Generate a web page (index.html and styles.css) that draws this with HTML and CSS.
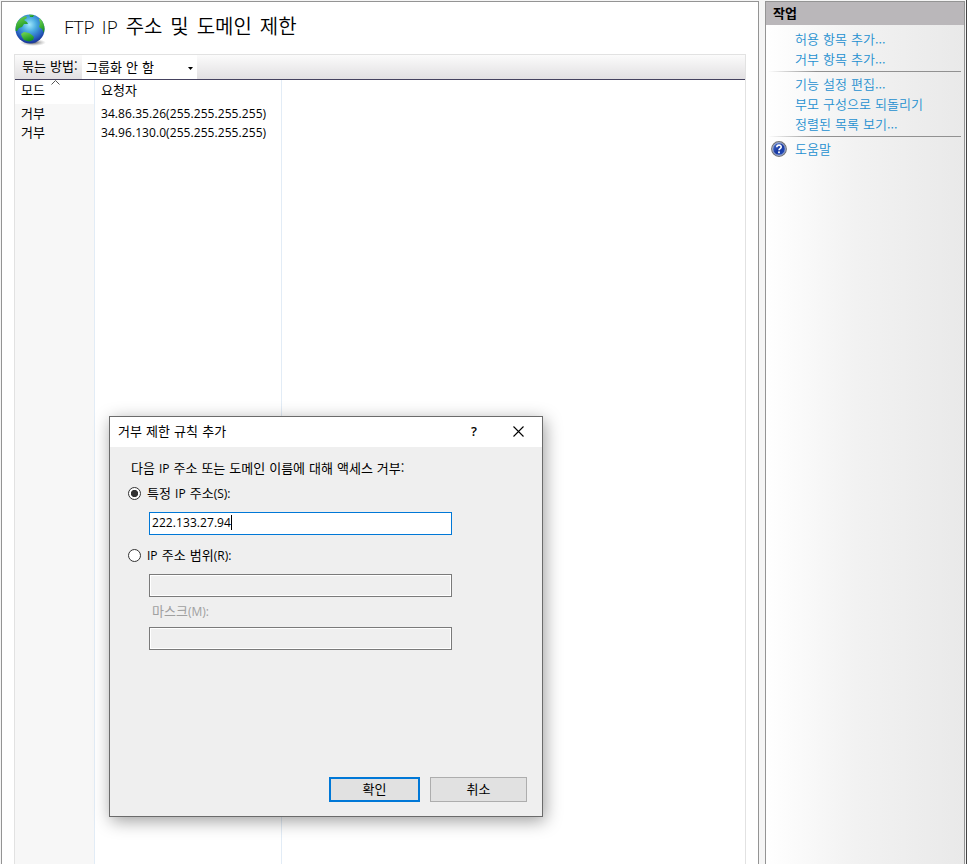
FILE: index.html
```html
<!DOCTYPE html>
<html lang="ko">
<head>
<meta charset="utf-8">
<title>FTP IP 주소 및 도메인 제한</title>
<link rel="stylesheet" href="styles.css">
</head>
<body>
<div class="window">
  <main class="page">
    <header class="heading">
      <svg class="globe" width="34" height="34" viewBox="0 0 34 34">
        <defs>
          <radialGradient id="sea" cx="48%" cy="35%" r="62%">
            <stop offset="0" stop-color="#a0e8fc"/><stop offset=".4" stop-color="#48aae0"/><stop offset=".8" stop-color="#2860c0"/><stop offset="1" stop-color="#1a3a9c"/>
          </radialGradient>
          <linearGradient id="land" x2="0.4" y2="1"><stop offset="0" stop-color="#7bdc55"/><stop offset="1" stop-color="#159221"/></linearGradient>
          <radialGradient id="shade"><stop offset="0" stop-color="#444" stop-opacity=".9"/><stop offset="1" stop-color="#888" stop-opacity="0"/></radialGradient>
          <clipPath id="ball"><circle cx="16" cy="16" r="14.5"/></clipPath>
        </defs>
        <ellipse cx="19" cy="29.5" rx="13" ry="3.5" fill="url(#shade)"/>
        <circle cx="16" cy="16" r="14.5" fill="url(#sea)"/>
        <g clip-path="url(#ball)" fill="url(#land)">
          <path d="M1 18 2 10 7 5 12 3 13 5 10 7 13 9 14 11 10 11 8 14 5 15 3 18Z"/>
          <path d="M7 21 10 19 15 20 18 22 20 24 19 27 15 28.5 10 27 8 24Z"/>
          <path d="M25 6 28 5 32 14 30 20 28 16 25 14 26 10Z"/>
          <path d="M15 1 20 2 19 4 16 4Z"/>
        </g>
      </svg>
      <h1><span class="h-latin">FTP IP</span> 주소 및 도메인 제한</h1>
    </header>
    <section class="list">
      <div class="toolbar">
        <span class="group-label">묶는 방법:</span>
        <div class="select"><span>그룹화 안 함</span><svg width="5" height="3" viewBox="0 0 5 3"><path d="M0 0H5L2.5 3Z"/></svg></div>
      </div>
      <div class="columns">
        <div class="col mode">
          <div class="th">모드<svg class="sort" width="9" height="5" viewBox="0 0 9 5"><path d="M.5 4.5 4.5.5 8.5 4.5" fill="none" stroke="#555"/></svg></div>
          <div class="td">거부</div>
          <div class="td">거부</div>
        </div>
        <div class="col requester">
          <div class="th">요청자</div>
          <div class="td latin">34.86.35.26(255.255.255.255)</div>
          <div class="td latin">34.96.130.0(255.255.255.255)</div>
        </div>
        <div class="col"></div>
      </div>
    </section>
  </main>
  <aside class="actions">
    <h2>작업</h2>
    <ul>
      <li>허용 항목 추가...</li>
      <li>거부 항목 추가...</li>
    </ul>
    <ul>
      <li>기능 설정 편집...</li>
      <li>부모 구성으로 되돌리기</li>
      <li>정렬된 목록 보기...</li>
    </ul>
    <ul>
      <li class="help"><svg width="16" height="16" viewBox="0 0 16 16"><defs><linearGradient id="hg" x2="1" y2="1"><stop offset="0" stop-color="#5e86dc"/><stop offset=".5" stop-color="#1839a2"/><stop offset="1" stop-color="#2453c5"/></linearGradient></defs><circle cx="8" cy="8" r="7.3" fill="url(#hg)" stroke="#777" stroke-width="1.2"/><circle cx="8" cy="8" r="6.3" fill="none" stroke="#c5cad6" stroke-width=".9"/><path d="M5.8 6.3C5.8 3.3 10.4 3.5 10.2 6.1 10.1 7.6 8 7.7 8 9.3" fill="none" stroke="#fff" stroke-width="1.6"/><rect x="7.1" y="10.4" width="1.8" height="1.8" fill="#fff"/></svg><span>도움말</span></li>
    </ul>
  </aside>
</div>
<div class="dialog">
  <div class="titlebar">
    <span class="caption">거부 제한 규칙 추가</span>
    <span class="question">?</span>
    <svg width="11" height="11" viewBox="0 0 11 11"><path d="M.5.5 10.5 10.5M10.5.5.5 10.5" fill="none" stroke="#000" stroke-width="1.1"/></svg>
  </div>
  <div class="body">
    <p class="prompt">다음 <span class="latin">IP</span> 주소 또는 도메인 이름에 대해 액세스 거부:</p>
    <div class="option"><i class="radio on"></i><span>특정 <span class="latin">IP</span> 주소<span class="latin">(S):</span></span></div>
    <div class="field focus"><span class="latin address">222.133.27.94</span><i class="caret"></i></div>
    <div class="option second"><i class="radio"></i><span><span class="latin">IP</span> 주소 범위<span class="latin">(R):</span></span></div>
    <div class="field off"></div>
    <div class="mask">마스크<span class="latin">(M):</span></div>
    <div class="field off"></div>
    <div class="buttons"><div class="button default">확인</div><div class="button">취소</div></div>
  </div>
</div>
</body>
</html>
```
FILE: styles.css
```css
* { box-sizing: border-box; }
body {
  margin: 0;
  height: 864px;
  overflow: hidden;
  position: relative;
  background: #f5f5f5;
  color: #000;
  font: 13px/20px "Noto Sans CJK KR", sans-serif;
  font-weight: 400;
  word-spacing: .5px;
  white-space: nowrap;
}
h1, h2, p, ul { margin: 0; padding: 0; font-weight: inherit; list-style: none; }
svg { display: block; flex: none; }
.latin { font-family: "Open Sans", "Noto Sans CJK KR", sans-serif; font-size: 12px; font-weight: 400; }
.window { display: flex; gap: 6px; height: 864px; padding: 1px 0 0 1px; border-right: 1px solid #444; }
.page {
  width: 758px;
  display: flex;
  flex-direction: column;
  padding: 0 12px;
  background: #fff;
  border: 1px solid #949494;
  border-bottom: 0;
}
.heading { display: flex; height: 52px; padding-top: 11px; }
.heading h1 { margin: -1px 0 0 16px; font-size: 20px; font-weight: 350; line-height: 28px; word-spacing: 2.3px; }
.h-latin { font-family: "Open Sans", sans-serif; font-size: 19px; }
.list { flex: 1; display: flex; flex-direction: column; border: 1px solid #e2e2e2; border-bottom: 0; }
.toolbar {
  height: 25px;
  display: flex;
  line-height: 21px;
  background: linear-gradient(#fbfbfb, #e2e0e2);
  border-bottom: 1px solid #45425f;
}
.group-label { width: 67px; padding-left: 7px; }
.select { width: 115px; display: flex; align-items: center; justify-content: space-between; padding: 0 4px 1px 4px; background: #fff; }
.select svg { margin-top: 3px; }
.columns { flex: 1; display: flex; }
.col { border-right: 1px solid #e2ecf6; }
.col:last-child { border: 0; }
.mode { width: 80px; background: #f7f7f7; }
.requester { width: 187px; }
.th { position: relative; height: 24px; padding-left: 6px; line-height: 20px; background: #fff; }
.td { height: 19px; padding-left: 6px; line-height: 17px; }
.td.latin { line-height: 19px; letter-spacing: .07px; }
.sort { position: absolute; left: 36px; top: 0; }
.actions {
  width: 200px;
  border: 1px solid #949494;
  border-bottom: 0;
  background: linear-gradient(90deg, #fff, #f2f2f2 45%, #e9e9e9);
}
.actions h2 { height: 23px; margin-bottom: 4px; padding-left: 7px; font-size: 13px; font-weight: 700; line-height: 21px; background: #bab7ba; }
.actions ul { padding-left: 29px; color: #2490d0; font-weight: 350; }
.actions li { height: 20px; line-height: 20px; }
.actions ul + ul { position: relative; margin-top: 2px; padding-top: 3px; }
.actions ul + ul::before {
  content: "";
  position: absolute;
  left: 2px;
  right: 3px;
  top: 0;
  height: 1px;
  background: linear-gradient(90deg, transparent, #919191 25%, #919191);
}
.help { display: flex; align-items: center; gap: 8px; margin-left: -24px; }
.dialog {
  position: absolute;
  left: 109px;
  top: 416px;
  width: 434px;
  height: 401px;
  display: flex;
  flex-direction: column;
  background: #efefef;
  border: 1px solid #6b6b6b;
  box-shadow: 2px 4px 16px rgba(0, 0, 0, .38);
}
.titlebar { height: 30px; display: flex; align-items: center; padding: 0 18px 2px 8px; background: #fff; }
.caption { flex: 1; }
.titlebar svg { margin-top: 1px; }
.question { width: 42px; font: 600 13px/20px "Open Sans", sans-serif; }
.body { flex: 1; display: flex; flex-direction: column; padding: 11px 15px 14px 18px; }
.prompt { padding-left: 3px; height: 20px; word-spacing: .35px; }
.option { display: flex; align-items: center; gap: 6px; height: 20px; margin-top: 5px; }
.option.second { margin: 10px 0 1px; }
.radio { width: 13px; height: 13px; border: 1px solid #333; border-radius: 50%; background: #fff; }
.radio.on { background: radial-gradient(circle, #333 3.3px, #fff 4px); }
.field { flex: none; display: flex; align-items: center; width: 303px; height: 23px; margin-left: 21px; border: 1px solid #0078d7; background: #fff; }
.focus { margin-top: 9px; padding: 0 0 2px 2px; }
.address { letter-spacing: .07px; }
.caret { width: 1px; height: 15px; background: #000; }
.off { border-color: #7a7a7a; background: #efefef; box-shadow: inset 0 0 0 1px #fff; margin-top: 8px; }
.mask { height: 20px; margin: 4px 0 -2px 24px; color: #a0a0a0; }
.buttons { display: flex; justify-content: flex-end; gap: 10px; margin-top: auto; }
.button { width: 97px; height: 25px; line-height: 22px; text-align: center; background: #e1e1e1; border: 1px solid #adadad; }
.default { width: 91px; border: 2px solid #0078d7; line-height: 20px; }
```
